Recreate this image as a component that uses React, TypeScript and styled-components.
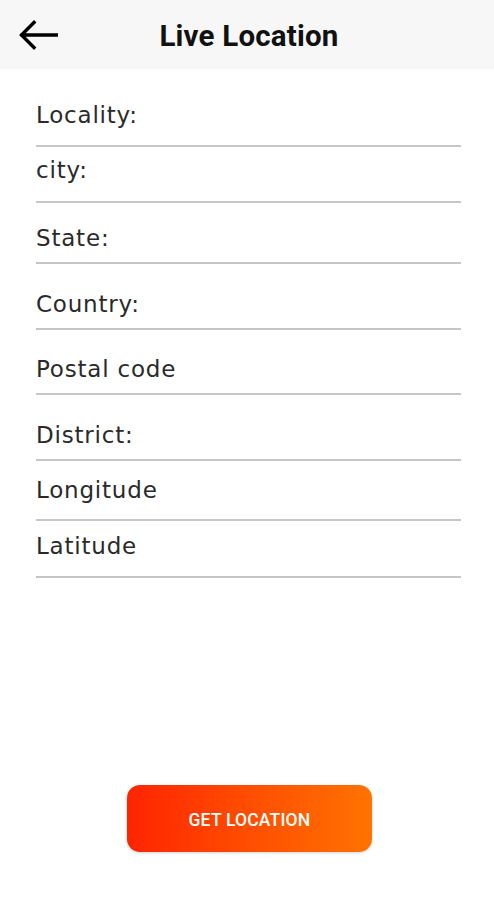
import React from "react";
import styled, { createGlobalStyle } from "styled-components";

const Global = createGlobalStyle`
  html, body { margin: 0; padding: 0; background: #ffffff; }
  #root { min-height: 100vh; }
`;

const Page = styled.div`
  display: flex;
  flex-direction: column;
  min-height: 100vh;
  background: #ffffff;
`;

const Header = styled.header`
  height: 69px;
  background: #f7f7f7;
  display: grid;
  grid-template-columns: 72px 1fr 72px;
  align-items: center;
`;

const BackButton = styled.button`
  border: none;
  background: transparent;
  padding: 0 0 0 18px;
  height: 69px;
  display: flex;
  align-items: center;
  cursor: pointer;
`;

const Title = styled.h1`
  margin: 0;
  text-align: center;
  font-family: Roboto, "Liberation Sans", sans-serif;
  font-weight: 700;
  font-size: 29.5px;
  letter-spacing: 0.2px;
  color: #111111;
  padding-left: 4px;
  padding-top: 2px;
`;

const Form = styled.div`
  display: flex;
  flex-direction: column;
  padding: 0 33px 0 36px;
`;

const Field = styled.div<{ $pt: number; $pb: number }>`
  padding-top: ${(p) => p.$pt}px;
  padding-bottom: ${(p) => p.$pb}px;
  border-bottom: 2px solid #c6c6c6;
`;

const Label = styled.div`
  font-family: "DejaVu Sans", sans-serif;
  font-size: 23px;
  line-height: 28px;
  color: #2a2a2a;
  letter-spacing: 0.8px;
`;

const Footer = styled.div`
  margin-top: auto;
  display: flex;
  justify-content: center;
  padding: 0 0 48px 5px;
`;

const ActionButton = styled.button`
  width: 245px;
  height: 67px;
  border: none;
  border-radius: 13px;
  background: linear-gradient(90deg, #ff2400 0%, #ff4a00 45%, #ff7300 100%);
  box-shadow: 0 1px 3px rgba(0, 0, 0, 0.18);
  color: #ffffff;
  font-family: Roboto, "Liberation Sans", sans-serif;
  font-weight: 500;
  font-size: 17.5px;
  letter-spacing: 0.2px;
  padding-top: 3px;
  cursor: pointer;
`;

const fields: { label: string; pt: number; pb: number }[] = [
  { label: "Locality:", pt: 32, pb: 16 },
  { label: "city:", pt: 9, pb: 17 },
  { label: "State:", pt: 21, pb: 10 },
  { label: "Country:", pt: 26, pb: 10 },
  { label: "Postal code", pt: 25, pb: 10 },
  { label: "District:", pt: 26, pb: 10 },
  { label: "Longitude", pt: 15, pb: 15 },
  { label: "Latitude", pt: 11, pb: 16 },
];

export default function App() {
  return (
    <>
      <Global />
      <Page>
        <Header>
          <BackButton aria-label="Back">
            <svg width="40" height="30" viewBox="0 0 40 30" fill="none">
              <path
                d="M39 15H4M16 2.5L3.5 15L16 27.5"
                stroke="#000"
                strokeWidth="3.4"
                strokeLinecap="square"
                strokeLinejoin="miter"
              />
            </svg>
          </BackButton>
          <Title>Live Location</Title>
          <span />
        </Header>
        <Form>
          {fields.map((f) => (
            <Field key={f.label} $pt={f.pt} $pb={f.pb}>
              <Label>{f.label}</Label>
            </Field>
          ))}
        </Form>
        <Footer>
          <ActionButton>GET LOCATION</ActionButton>
        </Footer>
      </Page>
    </>
  );
}
